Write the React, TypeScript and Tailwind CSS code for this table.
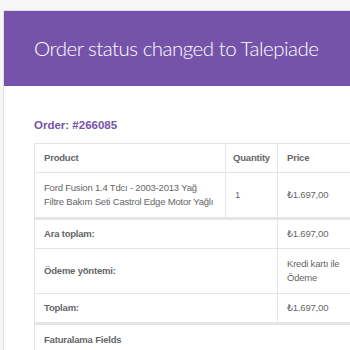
import React from "react";

const font = { fontFamily: '"Liberation Sans", "DejaVu Sans", Arial, sans-serif' };

const cell = "border border-[#e5e5e5] text-left align-middle px-[9px] leading-[14px]";

export default function App() {
  return (
    <div className="w-[350px] h-[350px] overflow-hidden bg-[#f7f7f7] pt-[10px] pl-[3px]" style={font}>
      <div className="w-[420px] bg-white border border-[#dedede] rounded-t-[3px]">
        <div
          className="bg-[#7653ab] h-[75px] flex items-center pl-[30px] text-white text-[20.5px] tracking-[-0.5px] font-light"
          style={{ fontFamily: 'Lato, "Liberation Sans", sans-serif' }}
        >
          Order status changed to Talepiade
        </div>
        <div className="pl-[30px] pt-[32px]">
          <h2 className="text-[11.5px] leading-[15px] font-bold text-[#7653ab] mb-[10px]">Order: #266085</h2>
          <table className="table-fixed border-collapse w-[360px] text-[9.5px] tracking-[-0.2px] text-[#666666]">
            <colgroup>
              <col className="w-[191px]" />
              <col className="w-[52px]" />
              <col className="w-[117px]" />
            </colgroup>
            <thead>
              <tr>
                <th className={`${cell} font-bold py-[7px]`}>Product</th>
                <th className={`${cell} font-bold py-[7px] !px-[7px]`}>Quantity</th>
                <th className={`${cell} font-bold py-[7px]`}>Price</th>
              </tr>
            </thead>
            <tbody>
              <tr>
                <td className={`${cell} py-[8px]`}>
                  Ford Fusion 1.4 Tdcı - 2003-2013 Yağ Filtre Bakım Seti Castrol Edge Motor Yağlı
                </td>
                <td className={`${cell} py-[8px]`}>1</td>
                <td className={`${cell} py-[8px]`}>₺1.697,00</td>
              </tr>
            </tbody>
            <tfoot>
              <tr>
                <th colSpan={2} className={`${cell} border-t-[3px] font-bold py-[7px]`}>
                  Ara toplam:
                </th>
                <td className={`${cell} border-t-[3px] py-[7px]`}>₺1.697,00</td>
              </tr>
              <tr>
                <th colSpan={2} className={`${cell} font-bold py-[8px]`}>
                  Ödeme yöntemi:
                </th>
                <td className={`${cell} py-[8px]`}>
                  Kredi kartı ile
                  <br />
                  Ödeme
                </td>
              </tr>
              <tr>
                <th colSpan={2} className={`${cell} font-bold py-[7px]`}>
                  Toplam:
                </th>
                <td className={`${cell} py-[7px]`}>₺1.697,00</td>
              </tr>
              <tr>
                <th colSpan={3} className={`${cell} border-t-[3px] font-bold py-[8px]`}>
                  Faturalama Fields
                </th>
              </tr>
            </tfoot>
          </table>
        </div>
      </div>
    </div>
  );
}
